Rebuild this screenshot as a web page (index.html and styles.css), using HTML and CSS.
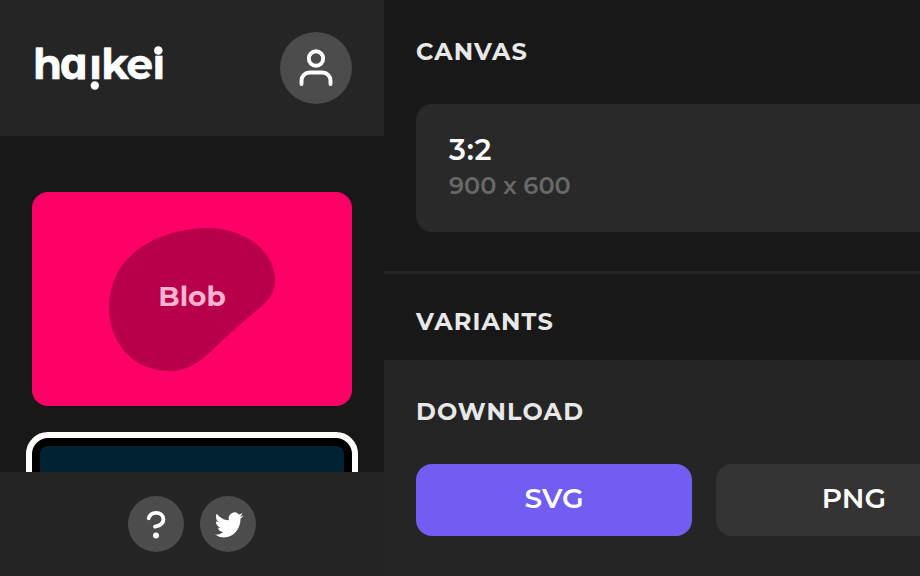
FILE: index.html
```html
<!DOCTYPE html>
<html lang="en">
<head>
<meta charset="utf-8">
<title>haikei</title>
<link rel="stylesheet" href="styles.css">
</head>
<body>
<div class="app">
  <aside class="sidebar">
    <header class="brand">
      <svg class="logo" viewBox="0 0 136 56" role="img" aria-label="haikei">
        <text y="39" x="1 28 57.3 69.2 94.5 120.4">h<tspan class="round-a">a</tspan>ıkeı</text>
        <circle cx="62.8" cy="45.5" r="4.2"/>
        <circle cx="126.3" cy="10.5" r="4.3"/>
      </svg>
      <button class="round user" aria-label="Account">
        <svg viewBox="0 0 72 72"><circle cx="36" cy="26.5" r="7.2"/><path d="M21.5 52v-3.5a8 8 0 0 1 8-8h13a8 8 0 0 1 8 8V52"/></svg>
      </button>
    </header>
    <main class="generators">
      <div class="card blob">
        <svg viewBox="0 0 320 214"><path d="M172 36C208 34 243 57 243 88C243 102 236 109 225 118C213 128 203 137 191 148C173 165 160 179 138 179C100 179 77 150 77 115C77 65 123 38 172 36Z"/></svg>
        <span class="blob-label">Blob</span>
      </div>
      <div class="card selected"></div>
    </main>
    <footer class="links">
      <button class="round" aria-label="Help">
        <svg viewBox="0 0 56 56"><path d="M20.7 22.2c1-3.6 3.8-5.4 7.4-5.4 4.3 0 7.3 2.7 7.3 6.6 0 4.5-3.8 6.2-8.4 7.2"/><circle class="dot" cx="28" cy="39.5" r="3"/></svg>
      </button>
      <button class="round" aria-label="Twitter">
        <svg viewBox="0 0 56 56"><path class="bird" transform="translate(14.8 13.6) scale(1.19 1.28)" d="M23.953 4.57a10 10 0 0 1-2.825.775 4.958 4.958 0 0 0 2.163-2.723c-.951.555-2.005.959-3.127 1.184a4.92 4.92 0 0 0-8.384 4.482C7.69 8.095 4.067 6.13 1.64 3.162a4.822 4.822 0 0 0-.666 2.475c0 1.71.87 3.213 2.188 4.096a4.904 4.904 0 0 1-2.228-.616v.06a4.923 4.923 0 0 0 3.946 4.827 4.996 4.996 0 0 1-2.212.085 4.936 4.936 0 0 0 4.604 3.417 9.867 9.867 0 0 1-6.102 2.105c-.39 0-.779-.023-1.17-.067a13.995 13.995 0 0 0 7.557 2.209c9.053 0 13.998-7.496 13.998-13.985 0-.21 0-.42-.015-.63A9.935 9.935 0 0 0 24 4.59z"/></svg>
      </button>
    </footer>
  </aside>
  <section class="panel">
    <div class="canvas">
      <h2>CANVAS</h2>
      <div class="size">
        <div class="ratio">3:2</div>
        <div class="dims">900 x 600</div>
      </div>
    </div>
    <div class="variants"><h2>VARIANTS</h2></div>
    <div class="download">
      <h2>DOWNLOAD</h2>
      <div class="buttons">
        <button class="btn primary">SVG</button>
        <button class="btn">PNG</button>
      </div>
    </div>
  </section>
</div>
</body>
</html>
```

FILE: styles.css
```css
* { box-sizing: border-box; }
body { margin: 0; background: #181818; color: #fff; font-family: Montserrat, Inter, sans-serif; }
button { border: 0; padding: 0; color: inherit; font: inherit; }
.app { display: flex; width: 920px; height: 576px; overflow: hidden; }
.sidebar { flex: none; display: flex; flex-direction: column; width: 384px; height: 576px; }
.brand { flex: none; height: 136px; padding: 32px 32px 0; display: flex; justify-content: space-between; align-items: flex-start; background: #252525; }
.logo { width: 136px; height: 56px; margin-top: 8px; overflow: visible; fill: #fff; }
.logo text { font-size: 42px; font-weight: 700; stroke: #fff; stroke-width: .5px; }
.logo .round-a { font-family: Inter, sans-serif; font-size: 43px; font-weight: 700; stroke-width: 1px; font-feature-settings: "cv11"; }
.round { width: 56px; height: 56px; border-radius: 50%; background: #4c4c4c; }
.round svg { display: block; width: 100%; height: 100%; fill: none; stroke: #fff; stroke-width: 3.8; stroke-linecap: round; }
.round.user { width: 72px; height: 72px; }
.user svg { stroke-width: 3.9; }
.round .dot, .round .bird { fill: #fff; stroke: none; }
.generators { flex: 1; min-height: 0; overflow: hidden; padding: 56px 26px 0; display: flex; flex-direction: column; gap: 26px; }
.card { flex: none; }
.blob { height: 214px; margin: 0 6px; border-radius: 16px; background: #ff0066; display: grid; place-items: center; overflow: hidden; }
.blob > * { grid-area: 1 / 1; }
.blob svg { width: 320px; height: 214px; fill: #b8004a; }
.blob-label { font-size: 28px; font-weight: 700; color: #ffb3d1; padding-bottom: 7px; }
.selected { height: 226px; border: 6px solid #fff; border-radius: 22px; background: #002233; box-shadow: inset 0 0 0 8px #000; }
.links { flex: none; height: 104px; display: flex; justify-content: center; gap: 16px; padding-top: 24px; background: #242424; }
.panel { flex: 1; min-width: 0; }
h2 { margin: 0; font-size: 24px; line-height: 32px; font-weight: 700; letter-spacing: 1.15px; color: #e8e8e8; }
.canvas { height: 274px; padding: 36px 0 0 32px; border-bottom: 3px solid #242424; }
.size { width: 600px; height: 128px; margin-top: 36px; padding: 28px 33px; border-radius: 16px; background: #292929; }
.ratio { font-size: 29px; line-height: 36px; font-weight: 600; letter-spacing: .8px; }
.dims { font-size: 24px; line-height: 36px; font-weight: 600; color: #686868; }
.variants { height: 86px; padding: 32px 32px 0; }
.download { height: 216px; padding: 36px 0 0 32px; background: #252525; }
.buttons { display: flex; gap: 24px; margin-top: 36px; }
.btn { flex: none; width: 276px; height: 72px; border-radius: 16px; background: #343434; font-size: 28px; font-weight: 600; padding-bottom: 4px; }
.btn.primary { background: #715df2; }
```
